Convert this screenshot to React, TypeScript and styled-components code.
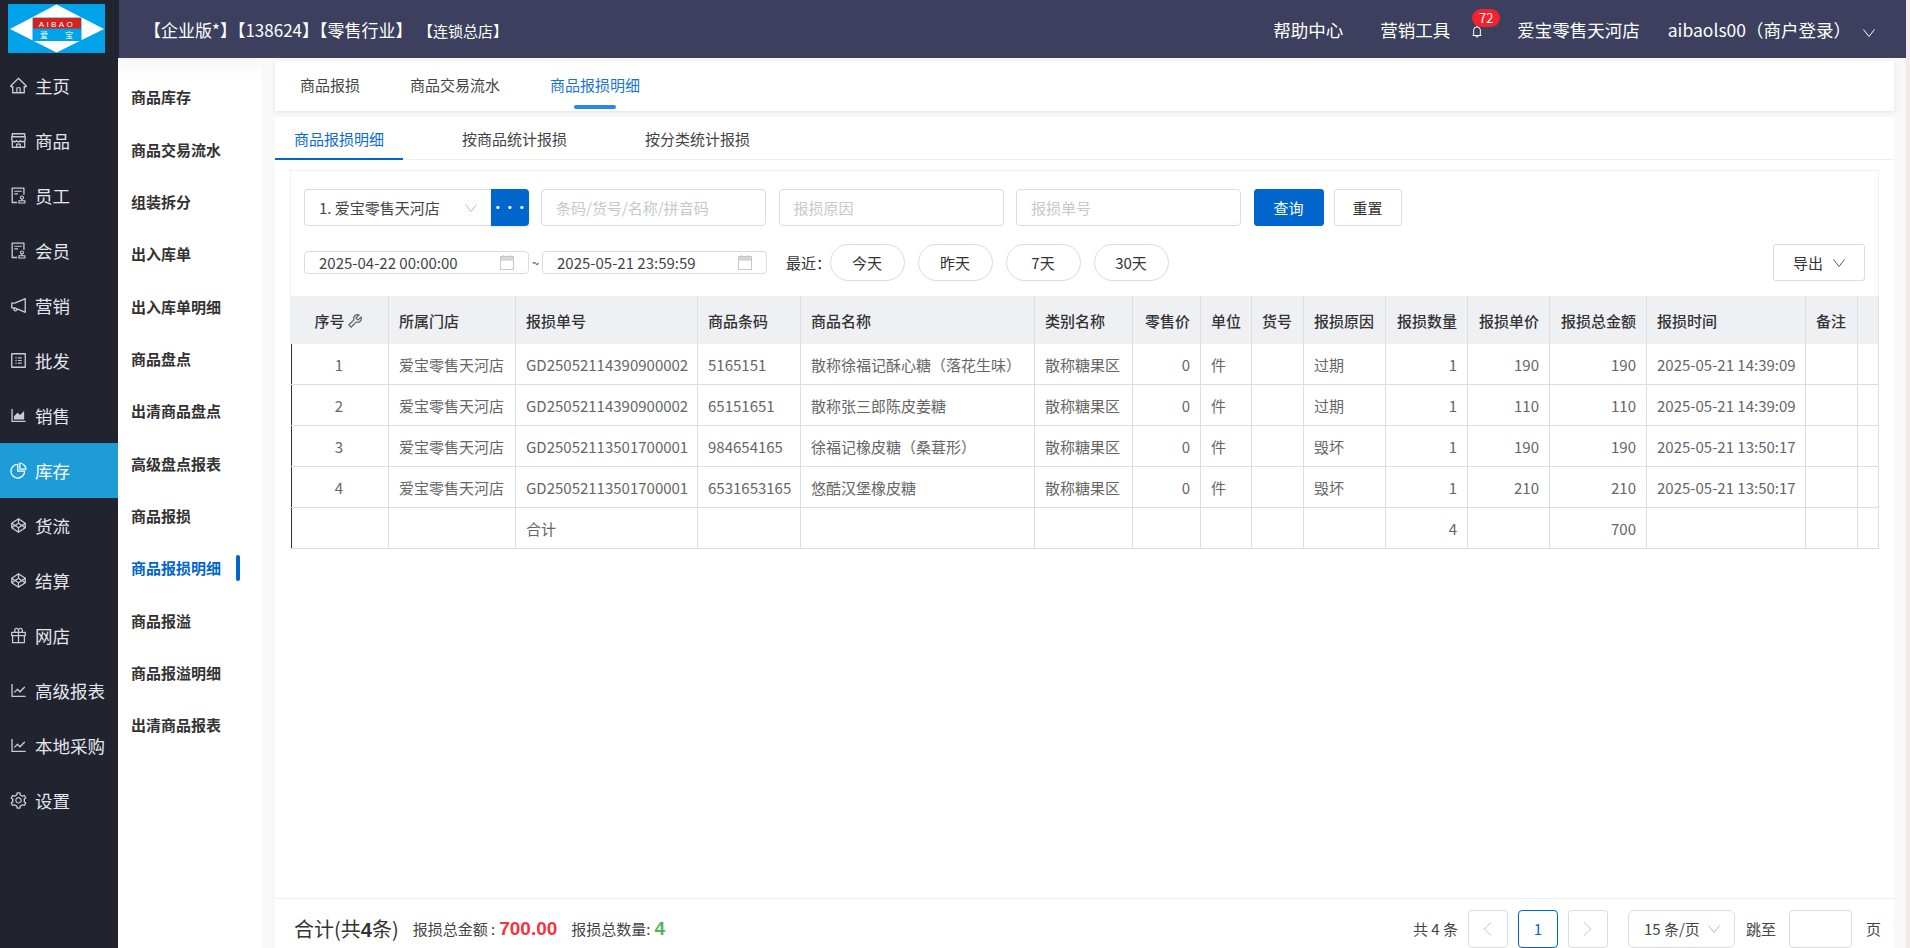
import React from 'react';
import styled, { createGlobalStyle } from 'styled-components';
import {
  AiOutlineHome,
  AiOutlineShop,
  AiOutlineAudit,
  AiOutlineNotification,
  AiOutlineProfile,
  AiOutlineAreaChart,
  AiOutlinePieChart,
  AiOutlineCodepen,
  AiOutlineGift,
  AiOutlineLineChart,
  AiOutlineSetting,
  AiOutlineBell,
  AiOutlineTool,
} from 'react-icons/ai';

const GlobalStyle = createGlobalStyle`
  html, body {
    margin: 0;
    height: 100%;
    overflow: hidden;
    background: #f4e9e8;
  }
  body {
    font-family: "Noto Sans CJK SC", "Noto Sans", sans-serif;
    font-size: 15px;
    color: #333;
  }
  * { box-sizing: border-box; }
`;

const Page = styled.div`
  width: 1906px;
  height: 948px;
  display: flex;
  flex-direction: column;
  background: #f8f8f9;
`;

const TopBar = styled.header`
  height: 58px;
  flex: none;
  display: flex;
  align-items: center;
  background: #3d3f5e;
  color: #fff;
  position: relative;
  z-index: 2;
`;

const LogoCell = styled.div`
  width: 119px;
  height: 58px;
  flex: none;
  padding: 4px 0 0 8px;
  background: #21232f;
`;

const TitleText = styled.div`
  margin-left: 25px;
  font-size: 17px;
  white-space: nowrap;
`;

const TitleSmall = styled.span`
  margin-left: 13px;
  font-size: 15px;
`;

const TopRight = styled.div`
  margin-left: auto;
  padding-right: 31px;
  display: flex;
  align-items: center;
  font-size: 17.5px;
  white-space: nowrap;
`;

const TopLink = styled.span<{ $gap: number }>`
  margin-left: ${(p) => p.$gap}px;
`;

const BellWrap = styled.span`
  position: relative;
  margin-left: 20px;
  width: 14px;
  height: 16px;
  display: flex;
  align-items: center;
  justify-content: center;
  font-size: 17px;
  top: 2px;
`;

const Badge = styled.span`
  position: absolute;
  left: 2px;
  top: -14px;
  width: 28px;
  height: 18px;
  border-radius: 9px;
  background: #f5222d;
  color: #fff;
  font-size: 13px;
  line-height: 18px;
  text-align: center;
`;

const UserChevron = styled.svg`
  margin-left: 12px;
  display: block;
`;

const Body = styled.div`
  flex: 1;
  min-height: 0;
  display: flex;
`;

const SideBar = styled.nav`
  width: 118px;
  flex: none;
  background: #21232f;
`;

const SideItem = styled.div<{ $active?: boolean }>`
  height: 55px;
  display: flex;
  align-items: center;
  padding-left: 9px;
  gap: 7px;
  font-size: 17.5px;
  color: ${(p) => (p.$active ? '#fff' : '#e4e6ec')};
  background: ${(p) => (p.$active ? '#1e9cd7' : 'transparent')};

  svg {
    font-size: 19px;
    flex: none;
    color: ${(p) => (p.$active ? '#fff' : '#c9ccd6')};
  }
`;

const SubNav = styled.nav`
  width: 144px;
  flex: none;
  padding-top: 12.5px;
  background: linear-gradient(#f6f6f7, #fff 18px);
`;

const SubItem = styled.div<{ $active?: boolean }>`
  height: 52.35px;
  padding-left: 13px;
  display: flex;
  align-items: center;
  position: relative;
  font-size: 15px;
  font-weight: 700;
  color: ${(p) => (p.$active ? '#0066cc' : '#333')};

  ${(p) =>
    p.$active &&
    `&::after {
      content: '';
      position: absolute;
      left: 117.5px;
      top: 13px;
      width: 4.5px;
      height: 26px;
      border-radius: 3px;
      background: #0066cc;
    }`}
`;

const Content = styled.main`
  flex: 1;
  min-width: 0;
  padding: 3px 12px 0 13px;
  display: flex;
  flex-direction: column;
  gap: 6px;
`;

const TabCard = styled.div`
  height: 50px;
  flex: none;
  padding: 0 25px;
  display: flex;
  gap: 50px;
  background: #fff;
  box-shadow: 0 1px 4px rgba(0, 0, 0, 0.09);
`;

const TopTab = styled.div<{ $active?: boolean }>`
  height: 50px;
  line-height: 48px;
  position: relative;
  color: ${(p) => (p.$active ? '#1a73d9' : '#444')};

  ${(p) =>
    p.$active &&
    `&::after {
      content: '';
      position: absolute;
      left: 24px;
      bottom: 2px;
      width: 42px;
      height: 4px;
      border-radius: 2px;
      background: #2a85ee;
    }`}
`;

const Panel = styled.section`
  flex: 1;
  min-height: 0;
  display: flex;
  flex-direction: column;
  background: #fff;
`;

const SubTabs = styled.div`
  height: 43px;
  flex: none;
  display: flex;
  gap: 40px;
  border-bottom: 1px solid #eee;
`;

const SubTab = styled.div<{ $active?: boolean }>`
  height: 43px;
  padding: 0 19px;
  line-height: 43px;
  color: ${(p) => (p.$active ? '#0b6bd0' : '#444')};
  border-bottom: 2px solid ${(p) => (p.$active ? '#0066cc' : 'transparent')};
`;

const TableArea = styled.div`
  padding: 10px 15px 0;
  flex: 1;
  min-height: 0;
`;

const FilterCard = styled.div`
  height: 126px;
  padding: 18px 13px 0;
  display: flex;
  flex-direction: column;
  gap: 18px;
  border: 1px solid #f0f0f0;
  border-bottom: 0;
`;

const FilterRow = styled.div`
  height: 37px;
  display: flex;
  align-items: stretch;
  gap: 12.5px;
`;

const Field = styled.div<{ $width?: number }>`
  width: ${(p) => p.$width ?? 225}px;
  flex: none;
  display: flex;
  align-items: center;
  justify-content: space-between;
  padding: 0 14px;
  border: 1px solid #dcdcdc;
  border-radius: 4px;
  background: #fff;
  color: #444;
  white-space: nowrap;
`;

const Placeholder = styled.span`
  color: #c5c8ce;
`;

const SelectGroup = styled.div`
  width: 224.5px;
  flex: none;
  display: flex;
`;

const StoreSelect = styled(Field)`
  width: 187px;
  border-right: 0;
  border-radius: 4px 0 0 4px;
`;

const MoreButton = styled.div`
  width: 37.5px;
  background: #0066cc;
  color: #fff;
  border-radius: 0 4px 4px 0;
  font-size: 12px;
  font-weight: 700;
  display: flex;
  align-items: center;
  justify-content: center;
  box-shadow: 0 1px 3px rgba(0, 0, 0, 0.12);
`;

const ButtonGroup = styled.div`
  display: flex;
  gap: 10px;
`;

const Button = styled.div<{ $primary?: boolean; $width: number }>`
  width: ${(p) => p.$width}px;
  display: flex;
  align-items: center;
  justify-content: center;
  gap: 10px;
  border-radius: 3px;
  border: 1px solid ${(p) => (p.$primary ? '#0066cc' : '#dcdcdc')};
  background: ${(p) => (p.$primary ? '#0066cc' : '#fff')};
  color: ${(p) => (p.$primary ? '#fff' : '#333')};
`;

const ExportButton = styled(Button)`
  margin-left: auto;
`;

const DateGroup = styled.div`
  display: flex;
  align-items: center;
`;

const Tilde = styled.span`
  width: 13px;
  text-align: center;
  font-size: 13px;
  color: #555;
`;

const RecentLabel = styled.span`
  margin-left: 6.5px;
  width: 31px;
  line-height: 37px;
  white-space: nowrap;
`;

const Pills = styled.div`
  display: flex;
  gap: 13px;
`;

const Pill = styled.div`
  width: 75px;
  display: flex;
  align-items: center;
  justify-content: center;
  border: 1px solid #dcdcdc;
  border-radius: 19px;
  color: #333;
`;

const Table = styled.table`
  width: 1589px;
  table-layout: fixed;
  border-collapse: separate;
  border-spacing: 0;
`;

const Col = styled.col<{ $width: number }>`
  width: ${(p) => p.$width}px;
`;

const Th = styled.th<{ $align: string }>`
  height: 48px;
  padding: 0 10px;
  background: #eff0f4;
  border-right: 1px solid #dcdee2;
  font-weight: 500;
  font-size: 15px;
  color: #333;
  white-space: nowrap;
  text-align: ${(p) => p.$align};

  svg {
    font-size: 18px;
    vertical-align: -3px;
    margin-left: 1px;
    color: #666;
  }
`;

const Td = styled.td<{ $align: string }>`
  height: 41px;
  padding: 0 10px;
  border-right: 1px solid #dddddd;
  border-bottom: 1px solid #dddddd;
  color: #666;
  white-space: nowrap;
  overflow: hidden;
  text-align: ${(p) => p.$align};

  &:first-child {
    background: linear-gradient(#333, #333) 1px 0 / 1px 100% no-repeat;
  }
`;

const Footer = styled.footer`
  height: 50px;
  flex: none;
  padding: 10px 13px 0 19px;
  display: flex;
  align-items: center;
  border-top: 1px solid #eeeeee;
`;

const TotalLabel = styled.span`
  font-size: 20px;
  color: #333;
  white-space: nowrap;

  b {
    font-family: "Liberation Sans", sans-serif;
  }
`;

const SumLabel = styled.span`
  margin-left: 14px;
  color: #444;
  white-space: nowrap;
`;

const SumValue = styled.b<{ $color: string }>`
  margin-left: 4px;
  font-family: "Liberation Sans", sans-serif;
  font-size: 19px;
  color: ${(p) => p.$color};
`;

const Pager = styled.div`
  margin-left: auto;
  height: 38px;
  display: flex;
  align-items: center;
  color: #444;
  white-space: nowrap;
`;

const PageBox = styled.div<{ $current?: boolean; $gap: number }>`
  width: 40px;
  height: 38px;
  margin-left: ${(p) => p.$gap}px;
  display: flex;
  align-items: center;
  justify-content: center;
  border: 1px solid ${(p) => (p.$current ? '#0066cc' : '#dcdcdc')};
  border-radius: 4px;
  color: ${(p) => (p.$current ? '#0066cc' : '#c5c8ce')};
`;

const PageSize = styled.div`
  width: 107px;
  height: 38px;
  margin: 0 11px 0 20px;
  padding: 0 14px 0 15px;
  display: flex;
  align-items: center;
  justify-content: space-between;
  border: 1px solid #dcdcdc;
  border-radius: 6px;
`;

const JumpInput = styled.div`
  width: 63px;
  height: 38px;
  margin: 0 14px 0 13px;
  border: 1px solid #dcdcdc;
  border-radius: 4px;
`;

const Chevron = ({ color = '#bbb', width = 12 }: { color?: string; width?: number }) => (
  <svg width={width} height="8" viewBox="0 0 12 8" fill="none" stroke={color} strokeWidth="1">
    <polyline points="0.5,0.5 6,7.5 11.5,0.5" />
  </svg>
);

const Calendar = () => (
  <svg width="14" height="15" viewBox="0 0 14 15" fill="none" stroke="#c8c8c8" strokeWidth="1">
    <rect x="0.5" y="1.5" width="13" height="13" />
    <rect x="0.5" y="1.5" width="13" height="3.5" fill="#d8d8d8" />
    <line x1="3.5" y1="0" x2="3.5" y2="2" />
    <line x1="10.5" y1="0" x2="10.5" y2="2" />
  </svg>
);

const Logo = () => (
  <svg width="97" height="49" viewBox="0 0 97 49">
    <rect width="97" height="49" fill="#00a2ea" />
    <polygon points="2,25 48.5,0.5 96,25 48.5,48.5" fill="#fff" />
    <rect x="24.5" y="13.5" width="49" height="23.5" fill="#00a2ea" />
    <rect x="25" y="14" width="48" height="10.5" fill="#d2231f" />
    <text x="49" y="22.5" fill="#fff" fontSize="8" letterSpacing="2.4" textAnchor="middle" fontFamily="Liberation Sans">
      AIBAO
    </text>
    <text x="36" y="33.5" fill="#fff" fontSize="8" textAnchor="middle">
      爱
    </text>
    <text x="61" y="33.5" fill="#fff" fontSize="8" textAnchor="middle">
      宝
    </text>
  </svg>
);

const sideItems = [
  { label: '主页', icon: <AiOutlineHome /> },
  { label: '商品', icon: <AiOutlineShop /> },
  { label: '员工', icon: <AiOutlineAudit /> },
  { label: '会员', icon: <AiOutlineAudit /> },
  { label: '营销', icon: <AiOutlineNotification /> },
  { label: '批发', icon: <AiOutlineProfile /> },
  { label: '销售', icon: <AiOutlineAreaChart /> },
  { label: '库存', icon: <AiOutlinePieChart />, active: true },
  { label: '货流', icon: <AiOutlineCodepen /> },
  { label: '结算', icon: <AiOutlineCodepen /> },
  { label: '网店', icon: <AiOutlineGift /> },
  { label: '高级报表', icon: <AiOutlineLineChart /> },
  { label: '本地采购', icon: <AiOutlineLineChart /> },
  { label: '设置', icon: <AiOutlineSetting /> },
];

const subItems = [
  '商品库存',
  '商品交易流水',
  '组装拆分',
  '出入库单',
  '出入库单明细',
  '商品盘点',
  '出清商品盘点',
  '高级盘点报表',
  '商品报损',
  '商品报损明细',
  '商品报溢',
  '商品报溢明细',
  '出清商品报表',
];

const columns = [
  { title: '序号', width: 99, align: 'center' },
  { title: '所属门店', width: 127, align: 'left' },
  { title: '报损单号', width: 182, align: 'left' },
  { title: '商品条码', width: 103, align: 'left' },
  { title: '商品名称', width: 234, align: 'left' },
  { title: '类别名称', width: 98, align: 'left' },
  { title: '零售价', width: 68, align: 'right' },
  { title: '单位', width: 51, align: 'left' },
  { title: '货号', width: 52, align: 'left' },
  { title: '报损原因', width: 82, align: 'left' },
  { title: '报损数量', width: 82, align: 'right' },
  { title: '报损单价', width: 82, align: 'right' },
  { title: '报损总金额', width: 97, align: 'right' },
  { title: '报损时间', width: 159, align: 'left' },
  { title: '备注', width: 52, align: 'left' },
  { title: '', width: 21, align: 'left' },
];

const store = '爱宝零售天河店';
const category = '散称糖果区';

const rows = [
  ['1', store, 'GD25052114390900002', '5165151', '散称徐福记酥心糖（落花生味）', category, '0', '件', '', '过期', '1', '190', '190', '2025-05-21 14:39:09', '', ''],
  ['2', store, 'GD25052114390900002', '65151651', '散称张三郎陈皮姜糖', category, '0', '件', '', '过期', '1', '110', '110', '2025-05-21 14:39:09', '', ''],
  ['3', store, 'GD25052113501700001', '984654165', '徐福记橡皮糖（桑葚形）', category, '0', '件', '', '毁坏', '1', '190', '190', '2025-05-21 13:50:17', '', ''],
  ['4', store, 'GD25052113501700001', '6531653165', '悠酷汉堡橡皮糖', category, '0', '件', '', '毁坏', '1', '210', '210', '2025-05-21 13:50:17', '', ''],
  ['', '', '合计', '', '', '', '', '', '', '', '4', '', '700', '', '', ''],
];

export default function App() {
  return (
    <Page>
      <GlobalStyle />
      <TopBar>
        <LogoCell>
          <Logo />
        </LogoCell>
        <TitleText>
          【企业版*】【138624】【零售行业】
          <TitleSmall>【连锁总店】</TitleSmall>
        </TitleText>
        <TopRight>
          <TopLink $gap={0}>帮助中心</TopLink>
          <TopLink $gap={37}>营销工具</TopLink>
          <BellWrap>
            <AiOutlineBell />
            <Badge>72</Badge>
          </BellWrap>
          <TopLink $gap={33}>爱宝零售天河店</TopLink>
          <TopLink $gap={28}>aibaols00（商户登录）</TopLink>
          <UserChevron as="span">
            <Chevron color="#fff" />
          </UserChevron>
        </TopRight>
      </TopBar>
      <Body>
        <SideBar>
          {sideItems.map((item) => (
            <SideItem key={item.label} $active={item.active}>
              {item.icon}
              {item.label}
            </SideItem>
          ))}
        </SideBar>
        <SubNav>
          {subItems.map((item) => (
            <SubItem key={item} $active={item === '商品报损明细'}>
              {item}
            </SubItem>
          ))}
        </SubNav>
        <Content>
          <TabCard>
            <TopTab>商品报损</TopTab>
            <TopTab>商品交易流水</TopTab>
            <TopTab $active>商品报损明细</TopTab>
          </TabCard>
          <Panel>
            <SubTabs>
              <SubTab $active>商品报损明细</SubTab>
              <SubTab>按商品统计报损</SubTab>
              <SubTab>按分类统计报损</SubTab>
            </SubTabs>
            <TableArea>
              <FilterCard>
                <FilterRow>
                  <SelectGroup>
                    <StoreSelect>
                      1. 爱宝零售天河店
                      <Chevron />
                    </StoreSelect>
                    <MoreButton>···</MoreButton>
                  </SelectGroup>
                  <Field>
                    <Placeholder>条码/货号/名称/拼音码</Placeholder>
                  </Field>
                  <Field>
                    <Placeholder>报损原因</Placeholder>
                  </Field>
                  <Field>
                    <Placeholder>报损单号</Placeholder>
                  </Field>
                  <ButtonGroup>
                    <Button $primary $width={70}>
                      查询
                    </Button>
                    <Button $width={68}>重置</Button>
                  </ButtonGroup>
                </FilterRow>
                <FilterRow>
                  <DateGroup>
                    <Field>
                      2025-04-22 00:00:00
                      <Calendar />
                    </Field>
                    <Tilde>~</Tilde>
                    <Field>
                      2025-05-21 23:59:59
                      <Calendar />
                    </Field>
                  </DateGroup>
                  <RecentLabel>最近：</RecentLabel>
                  <Pills>
                    <Pill>今天</Pill>
                    <Pill>昨天</Pill>
                    <Pill>7天</Pill>
                    <Pill>30天</Pill>
                  </Pills>
                  <ExportButton $width={92}>
                    导出
                    <Chevron color="#555" />
                  </ExportButton>
                </FilterRow>
              </FilterCard>
              <Table>
                <colgroup>
                  {columns.map((col, i) => (
                    <Col key={i} $width={col.width} />
                  ))}
                </colgroup>
                <thead>
                  <tr>
                    {columns.map((col, i) => (
                      <Th key={i} $align={col.align}>
                        {col.title}
                        {i === 0 && <AiOutlineTool />}
                      </Th>
                    ))}
                  </tr>
                </thead>
                <tbody>
                  {rows.map((row, r) => (
                    <tr key={r}>
                      {row.map((cell, c) => (
                        <Td key={c} $align={columns[c].align}>
                          {cell}
                        </Td>
                      ))}
                    </tr>
                  ))}
                </tbody>
              </Table>
            </TableArea>
            <Footer>
              <TotalLabel>
                合计(共<b>4</b>条)
              </TotalLabel>
              <SumLabel>
                报损总金额 :<SumValue $color="#f5333f">700.00</SumValue>
              </SumLabel>
              <SumLabel>
                报损总数量:<SumValue $color="#52b45a">4</SumValue>
              </SumLabel>
              <Pager>
                共 4 条
                <PageBox $gap={10}>
                  <svg width="9" height="14" viewBox="0 0 9 14" fill="none" stroke="#c5c8ce">
                    <polyline points="8,0.5 1,7 8,13.5" />
                  </svg>
                </PageBox>
                <PageBox $gap={10} $current>
                  1
                </PageBox>
                <PageBox $gap={10}>
                  <svg width="9" height="14" viewBox="0 0 9 14" fill="none" stroke="#c5c8ce">
                    <polyline points="1,0.5 8,7 1,13.5" />
                  </svg>
                </PageBox>
                <PageSize>
                  15 条/页
                  <Chevron />
                </PageSize>
                跳至
                <JumpInput />页
              </Pager>
            </Footer>
          </Panel>
        </Content>
      </Body>
    </Page>
  );
}
